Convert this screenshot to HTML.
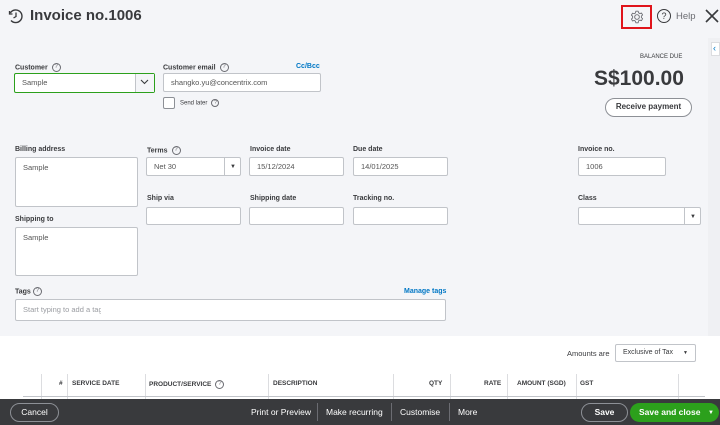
<!DOCTYPE html>
<html><head><style>
*{box-sizing:border-box;margin:0;padding:0}
body{width:720px;height:425px;overflow:hidden;background:#fff;font-family:"Liberation Sans",sans-serif;color:#393a3d;position:relative}
.a{position:absolute}
.top{left:0;top:0;width:720px;height:336px;background:#f4f5f8}
.lbl{position:absolute;font-size:7px;font-weight:bold;color:#393a3d}
.in{position:absolute;background:#fff;border:1px solid #c1c4c9;border-radius:2px;font-size:7.5px;color:#555;padding:0 0 0 7px}
.q{display:inline-block;width:9px;height:9px;border:1px solid #6b6c72;border-radius:50%;font-size:6px;text-align:center;line-height:7px;font-weight:normal;vertical-align:middle;margin-left:4px;color:#6b6c72}
.th{position:absolute;top:380px;font-size:6.5px;font-weight:bold;color:#393a3d}
.vl{position:absolute;top:374px;width:1px;height:25px;background:#dcdde0}
.ft{position:absolute;font-size:8.5px;color:#fff;top:407px}
.arr{position:absolute;font-size:6px;line-height:6px}
</style></head><body>
<div class="a top"></div>
<div class="a" style="left:708px;top:38px;width:12px;height:298px;background:#eff0f3"></div>
<div class="a" style="left:711px;top:42px;width:9px;height:14px;background:#fff;border:1px solid #dcdde0;color:#0077c5;font-size:9px;line-height:11px;padding-left:1px">‹</div>
<svg class="a" style="left:8px;top:8px" width="16" height="16" viewBox="0 0 16 16"><path d="M3 12.5A6.3 6.3 0 1 0 2.3 5" fill="none" stroke="#393a3d" stroke-width="1.4"/><path d="M1.5 3v3h3" fill="none" stroke="#393a3d" stroke-width="1.3"/><path d="M8 4.5V8.5l-2.5 1.5" fill="none" stroke="#393a3d" stroke-width="1.3"/></svg>
<div class="a" style="left:30px;top:7px;font-size:15px;font-weight:bold;color:#393a3d">Invoice no.1006</div>
<div class="a" style="left:621px;top:5px;width:31px;height:24px;border:2px solid #e0141b"></div>
<svg class="a" style="left:630px;top:10px" width="14" height="14" viewBox="0 0 24 24"><path d="M12 8a4 4 0 1 0 0 8a4 4 0 1 0 0-8z" fill="none" stroke="#6b6c72" stroke-width="1.6"/><path d="M10 2h4l.6 2.8 2.3 1.3 2.7-1 2 3.4-2.1 1.9v2.6l2.1 1.9-2 3.4-2.7-1-2.3 1.3L14 22h-4l-.6-2.8-2.3-1.3-2.7 1-2-3.4 2.1-1.9V10.7L2.4 8.8l2-3.4 2.7 1 2.3-1.3z" fill="none" stroke="#6b6c72" stroke-width="1.5" stroke-linejoin="round"/></svg>
<div class="a" style="left:657px;top:9px;width:14px;height:14px;border:1.3px solid #393a3d;border-radius:50%;font-size:9px;text-align:center;line-height:12px">?</div>
<div class="a" style="left:676px;top:11px;font-size:9.5px;color:#6b6c72">Help</div>
<svg class="a" style="left:705px;top:9px" width="14" height="14" viewBox="0 0 14 14"><path d="M1 1L13 13M13 1L1 13" stroke="#393a3d" stroke-width="1.6"/></svg>
<div class="a" style="left:640px;top:54px;font-size:6px;color:#393a3d">BALANCE DUE</div>
<div class="a" style="left:594px;top:67px;font-size:21px;font-weight:bold;color:#393a3d">S$100.00</div>
<div class="a" style="left:605px;top:98px;width:87px;height:19px;border:1.3px solid #8d9096;border-radius:10px;background:#fff;font-size:8px;font-weight:bold;text-align:center;line-height:16px">Receive payment</div>
<div class="lbl" style="left:15px;top:63px">Customer<span class="q">?</span></div>
<div class="in" style="left:14px;top:73px;width:141px;height:20px;border:1.2px solid #2ca01c;line-height:18px">Sample</div>
<div class="a" style="left:135px;top:74px;width:19px;height:18px;background:#f4f5f8;border-left:1px solid #c1c4c9"></div>
<svg class="a" style="left:140px;top:79px" width="9" height="6" viewBox="0 0 9 6"><path d="M1 1l3.5 3.5L8 1" fill="none" stroke="#393a3d" stroke-width="1.1"/></svg>
<div class="lbl" style="left:163px;top:63px">Customer email<span class="q">?</span></div>
<div class="a" style="left:296px;top:63px;font-size:7px;font-weight:bold;color:#0077c5">Cc/Bcc</div>
<div class="in" style="left:163px;top:73px;width:158px;height:19px;line-height:17px">shangko.yu@concentrix.com</div>
<div class="a" style="left:163px;top:97px;width:12px;height:12px;background:#fff;border:1px solid #8d9096;border-radius:2px"></div>
<div class="a" style="left:180px;top:99px;font-size:6px;color:#393a3d">Send later<span class="q" style="width:8px;height:8px;line-height:6px;font-size:5px">?</span></div>
<div class="lbl" style="left:15px;top:146px">Billing address</div>
<div class="in" style="left:15px;top:157px;width:123px;height:50px;padding-top:5px">Sample</div>
<div class="lbl" style="left:15px;top:216px">Shipping to</div>
<div class="in" style="left:15px;top:227px;width:123px;height:49px;padding-top:5px">Sample</div>
<div class="lbl" style="left:147px;top:146px">Terms<span class="q">?</span></div>
<div class="in" style="left:146px;top:157px;width:95px;height:19px;line-height:17px">Net 30</div>
<div class="a" style="left:224px;top:158px;width:1px;height:17px;background:#c1c4c9"></div>
<div class="arr" style="left:230px;top:164px">▼</div>
<div class="lbl" style="left:250px;top:146px">Invoice date</div>
<div class="in" style="left:249px;top:157px;width:95px;height:19px;line-height:17px">15/12/2024</div>
<div class="lbl" style="left:353px;top:146px">Due date</div>
<div class="in" style="left:353px;top:157px;width:95px;height:19px;line-height:17px">14/01/2025</div>
<div class="lbl" style="left:147px;top:195px">Ship via</div>
<div class="in" style="left:146px;top:207px;width:95px;height:18px"></div>
<div class="lbl" style="left:250px;top:195px">Shipping date</div>
<div class="in" style="left:249px;top:207px;width:95px;height:18px"></div>
<div class="lbl" style="left:353px;top:195px">Tracking no.</div>
<div class="in" style="left:353px;top:207px;width:95px;height:18px"></div>
<div class="lbl" style="left:578px;top:146px">Invoice no.</div>
<div class="in" style="left:578px;top:157px;width:88px;height:19px;line-height:17px">1006</div>
<div class="lbl" style="left:578px;top:195px">Class</div>
<div class="in" style="left:578px;top:207px;width:123px;height:18px"></div>
<div class="a" style="left:684px;top:208px;width:1px;height:16px;background:#c1c4c9"></div>
<div class="arr" style="left:690px;top:214px">▼</div>
<div class="lbl" style="left:15px;top:287px">Tags<span class="q" style="margin-left:2px">?</span></div>
<div class="a" style="left:404px;top:288px;font-size:7px;font-weight:bold;color:#0077c5">Manage tags</div>
<div class="in" style="left:15px;top:299px;width:431px;height:22px;line-height:20px;color:#9a9ca1">Start typing to add a ta<span style="display:inline-block;width:3px;overflow:hidden;vertical-align:top">g</span></div>
<div class="a" style="left:567px;top:349px;font-size:7.5px;color:#393a3d">Amounts are</div>
<div class="in" style="left:615px;top:344px;width:81px;height:18px;line-height:16px;font-size:7px;color:#393a3d">Exclusive of Tax<span style="position:absolute;right:7px;top:6px;font-size:5px;line-height:5px">▼</span></div>
<div class="vl" style="left:41px"></div><div class="vl" style="left:67px"></div><div class="vl" style="left:145px"></div><div class="vl" style="left:268px"></div><div class="vl" style="left:393px"></div><div class="vl" style="left:450px"></div><div class="vl" style="left:507px"></div><div class="vl" style="left:576px"></div><div class="vl" style="left:678px"></div>
<div class="a" style="left:23px;top:396px;width:682px;height:1px;background:#c1c4c9"></div>
<div class="th" style="left:59px">#</div>
<div class="th" style="left:72px">SERVICE DATE</div>
<div class="th" style="left:149px">PRODUCT/SERVICE<span class="q">?</span></div>
<div class="th" style="left:273px">DESCRIPTION</div>
<div class="th" style="left:429px">QTY</div>
<div class="th" style="left:484px">RATE</div>
<div class="th" style="left:517px">AMOUNT (SGD)</div>
<div class="th" style="left:580px">GST</div>
<div class="a" style="left:0;top:399px;width:720px;height:26px;background:#393a3d"></div>
<div class="a" style="left:10px;top:403px;width:49px;height:19px;border:1px solid #8d9096;border-radius:10px;color:#fff;font-size:8.5px;text-align:center;line-height:17px">Cancel</div>
<div class="ft" style="left:251px">Print or Preview</div>
<div class="a" style="left:317px;top:403px;width:1px;height:18px;background:#6b6c72"></div>
<div class="ft" style="left:326px">Make recurring</div>
<div class="a" style="left:391px;top:403px;width:1px;height:18px;background:#6b6c72"></div>
<div class="ft" style="left:400px">Customise</div>
<div class="a" style="left:449px;top:403px;width:1px;height:18px;background:#6b6c72"></div>
<div class="ft" style="left:458px">More</div>
<div class="a" style="left:581px;top:403px;width:47px;height:19px;border:1px solid #8d9096;border-radius:10px;color:#fff;font-size:8.5px;font-weight:bold;text-align:center;line-height:17px">Save</div>
<div class="a" style="left:630px;top:403px;width:89px;height:19px;background:#2ca01c;border-radius:10px;color:#fff;font-size:8.5px;font-weight:bold;line-height:19px;padding-left:9px">Save and close<span style="position:absolute;left:78px;top:7px;font-size:6px;line-height:6px">▼</span></div>
</body></html>
